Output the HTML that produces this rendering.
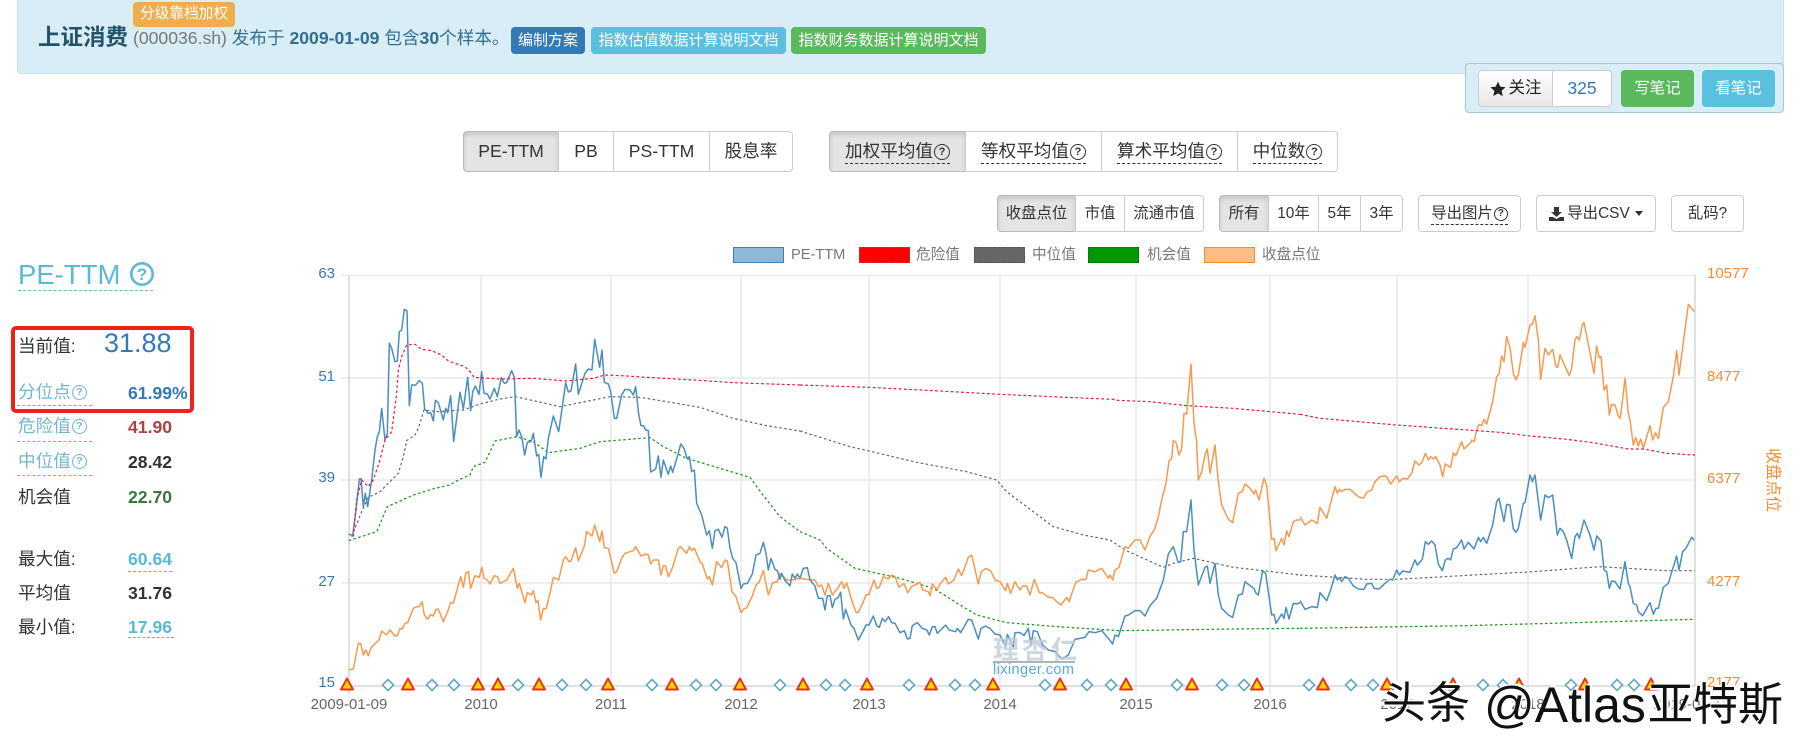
<!DOCTYPE html>
<html lang="zh">
<head>
<meta charset="utf-8">
<title>上证消费 PE-TTM</title>
<style>
html,body{margin:0;padding:0;background:#fff;width:1805px;height:753px;overflow:hidden}
body{position:relative;font-family:"Liberation Sans","Noto Sans CJK SC",sans-serif;color:#333}
.a{position:absolute;white-space:nowrap;line-height:1}
.b{position:absolute;box-sizing:border-box;display:flex;align-items:center;justify-content:center;white-space:nowrap;border:1px solid #ccc;background:#fff;color:#333;line-height:1}
.on{background:#e4e4e4;box-shadow:inset 0 3px 5px rgba(0,0,0,.125);border-color:#bbb}
.l{border-radius:4px 0 0 4px}
.r{border-radius:0 4px 4px 0}
.f{font-size:17.6px}
.s{font-size:15.4px}
.c{position:absolute;display:flex;align-items:center;justify-content:center;box-sizing:border-box;color:#fff;font-size:15px;border-radius:4px;white-space:nowrap;line-height:1}
.u{border-bottom:1px dashed #333;padding-bottom:2px;margin-top:4px;display:inline-flex;align-items:center}
.q{display:inline-flex;align-items:center;justify-content:center;box-sizing:border-box;border:1.5px solid currentColor;border-radius:50%;font-weight:bold;line-height:1}
.lb{position:absolute;left:18px;font-size:17.6px;line-height:20px;height:20px;white-space:nowrap;color:#333;display:flex;align-items:center}
.v{position:absolute;left:128px;font-size:17.6px;font-weight:bold;line-height:20px;height:20px;white-space:nowrap}
.dl{position:absolute;height:0;border-top:1px dashed #6fb4cf}
.cy{color:#72b6d0}
.ax{position:absolute;font-size:15px;line-height:16px;white-space:nowrap}
.lft{color:#3a78ad;right:1470px;text-align:right}
.rgt{color:#f58b35;left:1707px}
.xl{color:#666;transform:translateX(-50%);top:697px}
.leg{position:absolute;top:247px;height:16px;box-sizing:border-box;width:51px;border:1.5px solid}
.lt{position:absolute;top:247px;font-size:14.6px;line-height:16px;color:#777;white-space:nowrap}
</style>
</head>
<body>

<!-- banner -->
<div style="position:absolute;left:17px;top:-6px;width:1767px;height:80px;box-sizing:border-box;background:#d9edf7;border:1px solid #c6e4ef;border-radius:4px"></div>
<div class="c" style="left:133px;top:2px;width:102px;height:25px;background:#f0ad4e;font-size:14.7px">分级靠档加权</div>
<div class="a" style="left:38px;top:27px;font-size:22.5px;font-weight:bold;color:#245269">上证消费</div>
<div class="a" style="left:133px;top:30px;font-size:17.6px;color:#31708f"><span style="color:#777">(000036.sh)</span> 发布于 <b>2009-01-09</b> 包含<b>30</b>个样本。</div>
<div class="c" style="left:511px;top:27px;width:74px;height:27px;background:#337ab7">编制方案</div>
<div class="c" style="left:591px;top:27px;width:195px;height:27px;background:#5bc0de">指数估值数据计算说明文档</div>
<div class="c" style="left:791px;top:27px;width:195px;height:27px;background:#5cb85c">指数财务数据计算说明文档</div>

<!-- note panel -->
<div style="position:absolute;left:1465px;top:63px;width:319px;height:50px;box-sizing:border-box;background:#d9edf7;border:1px solid #a3c8d6;border-radius:4px"></div>
<div class="b" style="left:1478px;top:70px;width:75px;height:37px;border-radius:4px 0 0 4px;background:linear-gradient(#fff,#e6e6e6);font-size:16.5px;color:#222">
<svg width="16" height="16" viewBox="0 0 24 24" style="margin-right:3px"><path d="M12 1l3.4 7.4 8 .9-6 5.4 1.7 7.9L12 18.6 4.900 22.700l1.700-7.900-6-5.400 8-.9z" fill="#222"/></svg>关注</div>
<div class="b" style="left:1552px;top:70px;width:60px;height:37px;border-radius:0 4px 4px 0;font-size:17.600px;color:#337ab7">325</div>
<div class="c" style="left:1621px;top:70px;width:73px;height:37px;background:#5cb85c;font-size:15.4px">写笔记</div>
<div class="c" style="left:1702px;top:70px;width:73px;height:37px;background:#5bc0de;font-size:15.4px">看笔记</div>

<!-- group 1 -->
<div class="b f on l" style="left:463px;top:131px;width:96px;height:41px">PE-TTM</div>
<div class="b f" style="left:558px;top:131px;width:56px;height:41px">PB</div>
<div class="b f" style="left:613px;top:131px;width:97px;height:41px">PS-TTM</div>
<div class="b f r" style="left:709px;top:131px;width:84px;height:41px">股息率</div>

<!-- group 2 -->
<div class="b f on l" style="left:829px;top:131px;width:137px;height:41px"><span class="u">加权平均值<span class="q" style="width:16px;height:16px;font-size:11px;margin-left:1px">?</span></span></div>
<div class="b f" style="left:965px;top:131px;width:137px;height:41px"><span class="u">等权平均值<span class="q" style="width:16px;height:16px;font-size:11px;margin-left:1px">?</span></span></div>
<div class="b f" style="left:1101px;top:131px;width:137px;height:41px"><span class="u">算术平均值<span class="q" style="width:16px;height:16px;font-size:11px;margin-left:1px">?</span></span></div>
<div class="b f r" style="left:1237px;top:131px;width:101px;height:41px"><span class="u">中位数<span class="q" style="width:16px;height:16px;font-size:11px;margin-left:1px">?</span></span></div>

<!-- group 3 -->
<div class="b s on l" style="left:997px;top:195px;width:79px;height:37px">收盘点位</div>
<div class="b s" style="left:1075px;top:195px;width:50px;height:37px">市值</div>
<div class="b s r" style="left:1124px;top:195px;width:80px;height:37px">流通市值</div>

<!-- group 4 -->
<div class="b s on l" style="left:1219px;top:195px;width:50px;height:37px">所有</div>
<div class="b s" style="left:1268px;top:195px;width:51px;height:37px">10年</div>
<div class="b s" style="left:1318px;top:195px;width:43px;height:37px">5年</div>
<div class="b s r" style="left:1360px;top:195px;width:43px;height:37px">3年</div>

<div class="b s" style="left:1418px;top:195px;width:103px;height:37px;border-radius:4px"><span class="u">导出图片<span class="q" style="width:14px;height:14px;font-size:10px;margin-left:1px">?</span></span></div>
<div class="b s" style="left:1536px;top:195px;width:120px;height:37px;border-radius:4px">
<svg width="15" height="14" viewBox="0 0 15 14" style="margin-right:3px"><path d="M5 0h5v5h3L7.500 10 2 5h3zM0 10h4l3.500 2L11 10h4v4H0z" fill="#333"/></svg>导出CSV<span style="display:inline-block;margin-left:5px;border-left:4.500px solid transparent;border-right:4.500px solid transparent;border-top:5px solid #333"></span></div>
<div class="b s" style="left:1671px;top:195px;width:73px;height:37px;border-radius:4px">乱码?</div>

<!-- left stats -->
<div class="a" style="left:18px;top:261px;font-size:27.5px;color:#5bb9d6">PE-TTM</div>
<svg style="position:absolute;left:129px;top:261px" width="26" height="26" viewBox="0 0 26 26"><circle cx="13" cy="13" r="10.700" fill="none" stroke="#5bb9d6" stroke-width="2.600"/><text x="13" y="19" text-anchor="middle" font-family="Liberation Sans" font-size="17" font-weight="bold" fill="#5bb9d6">?</text></svg>
<div class="dl" style="left:18px;top:290px;width:135px;border-color:#72b6d0"></div>

<div class="lb" style="top:336px">当前值:</div>
<div class="a" style="left:104px;top:330px;font-size:27px;color:#337ab7">31.88</div>
<div class="lb cy" style="top:382px">分位点<span class="q" style="width:15px;height:15px;font-size:10.500px;margin-left:1px">?</span></div>
<div class="dl" style="left:17px;top:405px;width:75px"></div>
<div class="v" style="top:383px;color:#337ab7">61.99%</div>

<div class="lb cy" style="top:416px">危险值<span class="q" style="width:15px;height:15px;font-size:10.500px;margin-left:1px">?</span></div>
<div class="dl" style="left:17px;top:441px;width:75px"></div>
<div class="v" style="top:417px;color:#a94442">41.90</div>

<div class="lb cy" style="top:451px">中位值<span class="q" style="width:15px;height:15px;font-size:10.500px;margin-left:1px">?</span></div>
<div class="dl" style="left:17px;top:475px;width:75px"></div>
<div class="v" style="top:452px;color:#333">28.42</div>

<div class="lb" style="top:487px">机会值</div>
<div class="v" style="top:487px;color:#3c763d">22.70</div>

<div class="lb" style="top:549px">最大值:</div>
<div class="v" style="top:549px;color:#5bb9d6">60.64</div>
<div class="dl" style="left:128px;top:571px;width:44px"></div>
<div class="lb" style="top:583px">平均值</div>
<div class="v" style="top:583px;color:#333">31.76</div>
<div class="lb" style="top:617px">最小值:</div>
<div class="v" style="top:617px;color:#5bb9d6">17.96</div>
<div class="dl" style="left:128px;top:637px;width:46px"></div>

<div style="position:absolute;left:11px;top:326px;width:183px;height:87px;box-sizing:border-box;border:4px solid #f02218;border-radius:5px"></div>

<!-- legend -->
<div class="leg" style="left:733px;background:#8db8da;border-color:#3f7fb5"></div><div class="lt" style="left:791px">PE-TTM</div>
<div class="leg" style="left:859px;background:#f00;border:1.500px dashed #c33"></div><div class="lt" style="left:916px">危险值</div>
<div class="leg" style="left:974px;background:#666;border:1.500px dashed #555"></div><div class="lt" style="left:1032px">中位值</div>
<div class="leg" style="left:1088px;background:#090;border:1.500px dashed #070"></div><div class="lt" style="left:1147px">机会值</div>
<div class="leg" style="left:1204px;background:#fdbd85;border-color:#f58b35"></div><div class="lt" style="left:1262px">收盘点位</div>

<!-- axis labels -->
<div class="ax lft" style="top:266px">63</div>
<div class="ax lft" style="top:369px">51</div>
<div class="ax lft" style="top:470px">39</div>
<div class="ax lft" style="top:574px">27</div>
<div class="ax lft" style="top:675px">15</div>
<div class="ax rgt" style="top:266px">10577</div>
<div class="ax rgt" style="top:369px">8477</div>
<div class="ax rgt" style="top:471px">6377</div>
<div class="ax rgt" style="top:574px">4277</div>
<div class="ax rgt" style="top:675px">2177</div>
<div class="ax xl" style="left:349px">2009-01-09</div>
<div class="ax xl" style="left:481px">2010</div>
<div class="ax xl" style="left:611px">2011</div>
<div class="ax xl" style="left:741px">2012</div>
<div class="ax xl" style="left:869px">2013</div>
<div class="ax xl" style="left:1000px">2014</div>
<div class="ax xl" style="left:1136px">2015</div>
<div class="ax xl" style="left:1270px">2016</div>
<div class="ax xl" style="left:1397px">2017</div>
<div class="ax xl" style="left:1528px">2018</div>
<div class="ax xl" style="left:1692px">2019-04-12</div>
<div class="a" style="left:1740px;top:472px;width:64px;text-align:center;font-size:16px;color:#f58b35;transform:rotate(90deg);transform-origin:center">收盘点位</div>

<!-- chart -->
<svg style="position:absolute;left:0;top:0" width="1805" height="753" viewBox="0 0 1805 753">
<g stroke="#e9e9e9" stroke-width="1.500" fill="none">
<path d="M341 275.500H1695M341 378H1695M341 480H1695M341 583H1695"/>
<path d="M481 275V694M611 275V694M741 275V694M869 275V694M1000 275V694M1136 275V694M1270 275V694M1397 275V694M1528 275V694"/>
</g>
<path d="M349 275V694M1695 275V686M341 686H1695" stroke="#d6d6d6" stroke-width="1.500" fill="none"/>

<!-- green dashed -->
<g fill="none" stroke="#1f9a1f" stroke-width="1.300" stroke-dasharray="2.500 2.500">
<g transform="translate(300,480) scale(.33333)"><polyline vector-effect="non-scaling-stroke" points="146,182 230,155 262,80 340,45 405,25 450,15 475,0 510,-15 520,-40 555,-53 585,-117 650,-130 700,-115 745,-82 840,-95 900,-115 1050,-127 1090,-100 1160,-65 1350,-8 1385,40 1440,110 1500,155"/></g>
<g transform="translate(800,480) scale(.33333)"><polyline vector-effect="non-scaling-stroke" points="0,155 60,180 80,205 165,265 300,295 400,325 480,375 530,405 620,428 800,442 960,452 1300,447 1500,445"/></g>
<g transform="translate(1300,480) scale(.33333)"><polyline vector-effect="non-scaling-stroke" points="0,445 500,437 1185,418"/></g>
</g>

<!-- gray dashed -->
<g fill="none" stroke="#666" stroke-width="1.200" stroke-dasharray="2.500 2.500">
<g transform="translate(300,260) scale(.33333)"><polyline vector-effect="non-scaling-stroke" points="155,830 185,755 205,712 240,695 295,640 310,590 320,542 345,525 355,505 372,450 410,455 490,450 540,432 600,417 645,410 700,422 780,440 880,420 930,410 1020,412 1100,425 1200,442 1300,475 1400,497 1500,513"/></g>
<g transform="translate(800,260) scale(.33333)"><polyline vector-effect="non-scaling-stroke" points="0,513 150,560 207,573 350,607 500,635 590,660 620,695 700,755 760,800 850,825 930,840 975,870 1090,922 1120,910 1180,895 1300,922 1390,932 1500,945"/></g>
<g transform="translate(1300,480) scale(.33333)"><polyline vector-effect="non-scaling-stroke" points="0,285 200,298 290,298 700,275 900,260 1100,272 1185,272"/></g>
</g>

<!-- orange -->
<g fill="none" stroke="#f8994d" stroke-width="1.500" stroke-linejoin="round">
<g transform="translate(300,480) scale(.33333)"><polyline vector-effect="non-scaling-stroke" points="146,570 160,567 175,490 182,490 190,525 197,510 205,527 213,503 237,480 245,453 260,465 270,450 285,468 292,467 300,445 307,447 315,430 323,428 340,385 350,380 358,380 366,365 373,405 383,418 392,404 400,408 408,388 415,387 430,425 443,395 452,367 460,370 482,290 490,322 497,280 505,275 512,325 525,287 538,292 545,262 552,295 562,300 570,312 583,287 592,290 600,310 620,300 640,265 652,325 658,310 675,368 682,338 693,345 700,332 708,368 714,362 722,420 730,385 738,387 750,340 760,292 776,300 790,240 797,230 807,245 813,243 827,203 835,243 853,198 860,155 876,168 884,135 899,185 906,153 913,203 925,205 943,280 950,275 965,235 975,220 990,215 1000,212 1007,200 1023,228 1037,222 1045,225 1052,252 1060,240 1075,240 1083,285 1090,257 1097,258 1105,290 1118,262 1135,205 1142,200 1160,220 1168,200 1175,212 1183,205 1200,245 1207,252 1222,297 1228,290 1237,315 1250,245 1265,263 1275,240 1282,243 1296,335 1308,350 1323,398 1330,388 1340,383 1357,348 1368,315 1378,305 1390,272 1405,345 1418,308 1432,305 1440,280 1460,300 1475,300 1500,295 1520,298 1545,300"/></g>
<g transform="translate(800,480) scale(.33333)"><polyline vector-effect="non-scaling-stroke" points="45,300 55,320 65,315 75,345 85,310 97,345 115,322 125,305 132,325 140,308 155,360 168,397 175,397 190,365 198,345 207,343 222,300 230,325 238,322 250,290 265,297 275,285 285,290 297,322 312,310 323,338 335,320 360,307 368,330 385,335 390,347 397,312 412,330 420,312 437,292 445,312 462,300 475,267 485,287 505,232 515,225 535,312 543,277 557,265 572,272 585,300 600,305 617,332 622,310 632,340 645,305 660,330 668,318 680,318 690,345 703,298 718,338 727,338 745,352 757,352 770,365 783,375 800,352 807,365 827,307 845,298 858,298 865,270 885,275 905,265 925,295 930,285 938,300 945,270 957,262 975,200 985,205 1005,180 1020,180 1035,210 1050,170 1065,145 1075,110 1085,60 1098,10 1107,-57 1115,-65 1120,-118 1128,-113 1137,-75 1145,-95 1152,-200 1160,-197 1173,-348 1182,-170 1190,-115 1195,0 1205,-25 1215,-75 1222,-93 1230,-20 1245,-105 1255,5 1265,75 1285,118 1298,128 1315,40 1327,35 1335,12 1350,25 1362,42 1367,30 1377,60 1392,-5 1400,15 1415,178 1422,175 1428,212 1445,175 1452,195 1460,152 1467,170 1480,125 1490,120 1500,120"/></g>
<g transform="translate(1300,260) scale(.33333)"><polyline vector-effect="non-scaling-stroke" points="0,770 15,795 35,780 52,790 60,742 80,775 105,680 112,700 118,688 125,695 135,688 150,688 175,710 190,715 200,697 215,690 225,665 240,650 258,648 272,672 290,648 298,665 308,655 322,657 335,640 345,603 357,615 367,605 376,580 385,600 392,590 400,597 407,590 420,615 428,650 436,612 452,622 460,578 467,588 485,545 492,567 512,548 515,540 523,545 530,510 537,493 545,497 552,478 560,492 578,425 590,350 597,342 605,288 612,305 620,230 630,263 640,340 648,360 655,345 670,248 675,262 690,195 697,193 705,167 715,240 722,358 735,265 745,285 758,268 768,320 773,322 780,285 808,347 815,325 825,240 830,230 838,240 847,195 852,187 882,340 890,258 897,292 903,290 912,390 920,375 928,465 935,433 945,435 955,468 961,475 975,355 985,460 990,480 1000,555 1007,532 1015,558 1022,537 1030,565 1050,497 1058,540 1067,518 1075,535 1090,442 1105,425 1120,350 1130,272 1137,345 1165,133 1183,155"/></g>
</g>

<!-- blue -->
<g fill="none" stroke="#4a8dbf" stroke-width="1.500" stroke-linejoin="round">
<g transform="translate(300,260) scale(.33333)"><polyline vector-effect="non-scaling-stroke" points="146,822 158,827 168,750 178,657 183,656 190,740 196,700 203,740 215,660 225,570 232,530 238,515 245,445 255,540 262,520 268,250 275,265 285,305 292,303 298,215 305,210 313,148 321,152 328,437 335,375 347,375 358,362 367,370 374,447 385,460 392,458 400,483 406,421 415,428 430,480 437,445 443,458 452,407 461,545 480,397 490,447 503,352 512,452 518,395 526,378 537,403 545,335 552,400 562,402 570,417 583,385 592,410 604,353 613,370 620,368 635,332 643,352 650,530 657,510 665,530 674,585 682,547 693,545 700,520 710,588 716,583 723,652 731,590 738,597 745,535 760,468 776,515 787,440 797,368 805,396 813,393 827,312 835,403 855,340 865,327 876,330 884,238 899,322 906,270 913,367 925,372 932,395 943,475 950,475 965,405 975,388 990,390 1000,405 1007,380 1016,462 1023,497 1030,497 1037,510 1045,512 1052,636 1067,627 1075,588 1083,652 1090,600 1105,643 1112,618 1118,637 1135,580 1142,552 1152,565 1162,597 1168,590 1175,635 1183,630 1190,730 1205,765 1220,825 1228,812 1237,865 1245,812 1255,808 1266,832 1275,800 1282,805 1290,865 1298,895 1308,908 1323,985 1330,972 1342,970 1357,942 1368,885 1380,880 1390,847 1398,880 1405,930 1413,895 1425,928 1432,932 1440,958 1445,940 1455,962 1470,977 1477,942 1485,955 1492,942 1500,955"/></g>
<g transform="translate(800,480) scale(.33333)"><polyline vector-effect="non-scaling-stroke" points="0,295 10,265 22,263 30,300 45,318 55,355 68,355 75,390 82,347 90,347 97,383 105,358 115,352 122,337 130,417 137,388 153,435 162,445 175,480 190,452 198,435 207,435 220,408 230,437 238,442 247,415 255,425 266,410 275,428 285,430 300,458 313,452 322,477 330,475 337,437 352,428 367,445 380,450 388,465 397,440 405,440 412,460 437,435 447,450 467,455 472,445 482,458 505,418 515,420 535,477 543,445 557,438 570,445 585,462 600,465 617,500 622,463 640,500 645,458 660,458 672,467 685,445 693,495 700,452 712,455 727,495 745,510 765,515 785,537 805,525 825,478 855,472 867,455 885,458 905,452 925,475 938,492 945,465 955,470 975,408 985,405 1005,392 1020,392 1035,408 1050,377 1065,360 1070,355 1090,300 1105,222 1120,200 1135,248 1142,245 1150,155 1160,155 1173,60 1182,210 1195,315 1215,262 1222,258 1230,310 1245,250 1255,345 1265,385 1285,405 1298,412 1315,345 1327,342 1335,305 1350,317 1362,325 1367,338 1375,345 1388,272 1397,280 1415,405 1422,403 1428,430 1445,402 1452,415 1458,382 1467,417 1480,370 1490,372 1500,368"/></g>
<g transform="translate(1300,480) scale(.33333)"><polyline vector-effect="non-scaling-stroke" points="0,362 15,388 35,380 52,383 60,338 80,362 92,330 105,285 112,300 118,293 125,305 135,290 145,295 160,318 175,327 192,328 200,312 215,310 222,325 237,327 255,310 270,298 278,300 290,270 298,285 308,273 330,277 345,240 352,255 367,238 376,185 385,193 395,183 405,195 415,252 427,272 436,240 445,235 452,240 460,207 470,203 485,180 492,207 505,187 522,207 535,172 542,185 550,172 560,190 578,135 590,65 597,55 612,125 620,73 630,75 640,147 648,157 655,145 670,70 675,68 690,-15 697,5 705,-15 722,120 735,45 745,53 758,45 772,165 780,145 790,155 800,180 815,235 825,170 832,160 838,175 852,120 870,165 882,210 890,168 903,183 912,270 920,275 928,325 935,303 945,305 960,327 975,245 985,310 990,320 1000,370 1010,375 1015,395 1028,407 1050,368 1060,403 1068,385 1075,385 1090,322 1105,310 1130,228 1137,270 1148,215 1158,205 1175,172 1183,180"/></g>
</g>

<!-- red dashed -->
<g fill="none" stroke="#f0153a" stroke-width="1.200" stroke-dasharray="2.800 2.400">
<g transform="translate(300,260) scale(.33333)"><polyline vector-effect="non-scaling-stroke" points="160,830 170,720 185,660 205,680 220,660 240,600 255,540 275,515 290,400 295,330 305,290 320,255 345,253 365,268 395,272 425,285 445,303 495,320 510,335 522,352 600,357 700,355 800,363 880,355 915,345 965,347 1040,352 1180,360 1300,368 1500,375"/></g>
<g transform="translate(800,260) scale(.33333)"><polyline vector-effect="non-scaling-stroke" points="0,375 207,382 400,392 600,403 800,412 940,418 950,421 1050,425 1160,437 1300,445 1500,463"/></g>
<g transform="translate(1300,260) scale(.33333)"><polyline vector-effect="non-scaling-stroke" points="0,463 60,475 290,495 530,512 600,517 690,528 800,538 880,548 985,567 1030,567 1100,580 1185,585"/></g>
</g>

<!-- diamonds -->
<defs>
<path id="dm" d="M0 -5.500L5.500 0L0 5.500L-5.500 0Z" fill="#fff" stroke="#63a9c4" stroke-width="1.600"/>
<path id="tr" d="M0 -6.500L6 4.500H-6Z" fill="#ffd500" stroke="#e8321c" stroke-width="1.900" stroke-linejoin="round"/>
</defs>
<g transform="translate(0,685)">
<use href="#dm" x="388"/><use href="#dm" x="432"/><use href="#dm" x="454"/><use href="#dm" x="518"/><use href="#dm" x="562"/><use href="#dm" x="586"/><use href="#dm" x="652"/><use href="#dm" x="696"/><use href="#dm" x="716"/><use href="#dm" x="780"/>
<use href="#dm" x="826"/><use href="#dm" x="845"/><use href="#dm" x="909"/><use href="#dm" x="955"/><use href="#dm" x="975"/><use href="#dm" x="1045"/><use href="#dm" x="1087"/><use href="#dm" x="1111"/><use href="#dm" x="1177"/><use href="#dm" x="1222"/><use href="#dm" x="1244"/>
<use href="#dm" x="1309"/><use href="#dm" x="1351"/><use href="#dm" x="1373"/><use href="#dm" x="1483"/><use href="#dm" x="1503"/><use href="#dm" x="1571"/><use href="#dm" x="1617"/><use href="#dm" x="1634"/>
<use href="#tr" x="347"/><use href="#tr" x="408"/><use href="#tr" x="478"/><use href="#tr" x="498"/><use href="#tr" x="539"/><use href="#tr" x="608"/><use href="#tr" x="672"/><use href="#tr" x="740"/>
<use href="#tr" x="803"/><use href="#tr" x="867"/><use href="#tr" x="931"/><use href="#tr" x="993"/><use href="#tr" x="1060"/><use href="#tr" x="1126"/><use href="#tr" x="1192"/><use href="#tr" x="1257"/>
<use href="#tr" x="1323"/><use href="#tr" x="1387"/><use href="#tr" x="1453"/><use href="#tr" x="1519"/><use href="#tr" x="1585"/><use href="#tr" x="1651"/>
</g>
</svg>

<!-- lixinger watermark -->
<div class="a" style="left:993px;top:637px;font-size:26px;letter-spacing:3px;color:#c3ced8;opacity:.8;font-weight:bold">理杏仁</div>
<div style="position:absolute;left:993px;top:661px;width:82px;height:1.500px;background:#aab4bd"></div>
<div class="a" style="left:993px;top:663px;font-size:14.500px;letter-spacing:.4px;color:#5aa7e8">lixinger.com</div>

<!-- toutiao watermark -->
<div class="a" style="left:1382px;top:682px;font-size:44px;color:#111;text-shadow:2px -2px 0 #fff,-1px 2px 0 #fff">头条</div>
<div class="a" style="left:1484px;top:680px;font-size:50px;color:#111;text-shadow:2px -2px 0 #fff,-1px 2px 0 #fff">@Atlas</div>
<div class="a" style="left:1648px;top:682px;font-size:45px;color:#111;text-shadow:2px -2px 0 #fff,-1px 2px 0 #fff">亚特斯</div>

</body>
</html>
